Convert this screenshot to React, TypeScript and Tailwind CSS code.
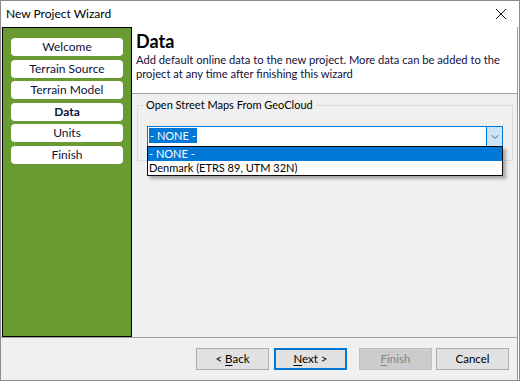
import { ChevronDown } from 'lucide-react';

const steps = ['Welcome', 'Terrain Source', 'Terrain Model', 'Data', 'Units', 'Finish'];

function WizButton({ label, u, kind }: { label: [string, string, string]; u?: boolean; kind?: 'default' | 'disabled' }) {
    const [pre, key, post] = label;
    let cls = 'bg-[#e1e1e1] border border-[#adadad] text-black';
    if (kind === 'default') cls = 'bg-[#e1e1e1] border-2 border-[#0078d7] text-black';
    if (kind === 'disabled') cls = 'bg-[#cccccc] border border-[#bfbfbf] text-[#838383]';
    return (
        <div className={`w-[73px] h-[22px] flex items-center justify-center text-[11.5px] ${cls}`}>
            <span>
                {pre}
                <span className={u ? 'underline underline-offset-2' : ''}>{key}</span>
                {post}
            </span>
        </div>
    );
}

export default function App() {
    return (
        <div className="w-[520px] h-[381px] bg-white text-[11px] text-black" style={{ fontFamily: 'Lato, "Noto Sans", sans-serif' }}>
            <div className="w-[520px] h-[381px] border border-[#8c8c8c] flex flex-col">
                {/* title bar */}
                <div className="h-[26px] flex items-center justify-between pl-[5px] pr-[8px] bg-white">
                    <span className="text-[12px] text-black">New Project Wizard</span>
                    <svg width="12" height="12" viewBox="0 0 12 12" className="mr-[4px]">
                        <path d="M1 1 L11 11 M11 1 L1 11" stroke="#111" strokeWidth="1" fill="none" />
                    </svg>
                </div>

                {/* body */}
                <div className="flex-1 flex flex-col bg-[#f0f0f0] border-r border-[#9a9a9a] mr-[1px]">
                    <div className="flex h-[310px]">
                        <div className="ml-[1px] w-[130px] h-[310px] bg-[#6a9b33] border border-black px-[8px] pt-[10px] flex flex-col gap-[3.6px]">
                            {steps.map((s) => (
                                <div
                                    key={s}
                                    className={`h-[18px] bg-white rounded-[4px] flex items-center justify-center text-[12px] text-[#10103a] ${s === 'Data' ? 'font-bold' : ''}`}
                                >
                                    {s}
                                </div>
                            ))}
                        </div>
                        <div className="flex-1 flex flex-col">
                            <div className="h-[67px] bg-white border-b border-[#a0a0a0] pl-[4px] pr-[4px] pt-[2px]">
                                <div className="text-[18px] font-bold leading-[24px]">Data</div>
                                <div className="text-[11.2px] leading-[14px] w-[374px] text-[#10103a]">
                                    Add default online data to the new project. More data can be added to the project at any time after finishing this wizard
                                </div>
                            </div>
                            <div className="pl-[5px] pr-[4px] pt-[6px]">
                                <div className="relative border border-[#dcdcdc] h-[56px] mt-[5px]">
                                    <span className="absolute -top-[9px] left-[6px] bg-[#f0f0f0] px-[2px] leading-[16px]">
                                        Open Street Maps From GeoCloud
                                    </span>
                                    <div className="relative mt-[20px] ml-[9px] mr-[9px]">
                                        <div className="h-[21px] bg-white border border-[#0078d7] flex items-center">
                                            <div className="flex-1 pl-[1px]">
                                                <span className="bg-[#0078d7] text-white px-[1px] leading-[15px] inline-block">- NONE -</span>
                                            </div>
                                            <div className="w-[16px] h-[19px] bg-[#cce4f7] border-l border-[#0078d7] flex items-center justify-center">
                                                <ChevronDown size={12} strokeWidth={1.5} color="#333" />
                                            </div>
                                        </div>
                                        <div className="absolute top-[20px] left-0 right-0 bg-white border border-[#0a0a0a] shadow-[3px_3px_3px_rgba(0,0,0,0.3)] z-10">
                                            <div className="h-[14px] bg-[#0078d7] text-white leading-[14px] pl-[1px]">- NONE -</div>
                                            <div className="h-[14px] leading-[14px] pl-[1px]">Denmark (ETRS 89, UTM 32N)</div>
                                        </div>
                                    </div>
                                </div>
                            </div>
                        </div>
                    </div>
                    <div className="border-t border-[#a0a0a0] flex-1 flex items-start justify-end pt-[10px] pr-[8px]">
                        <div className="flex">
                            <WizButton label={['< ', 'B', 'ack']} u />
                            <div className="ml-[5px]">
                                <WizButton label={['', 'N', 'ext >']} u kind="default" />
                            </div>
                            <div className="ml-[12px]">
                                <WizButton label={['', 'F', 'inish']} u kind="disabled" />
                            </div>
                            <div className="ml-[4px]">
                                <WizButton label={['', '', 'Cancel']} />
                            </div>
                        </div>
                    </div>
                </div>
            </div>
        </div>
    );
}
